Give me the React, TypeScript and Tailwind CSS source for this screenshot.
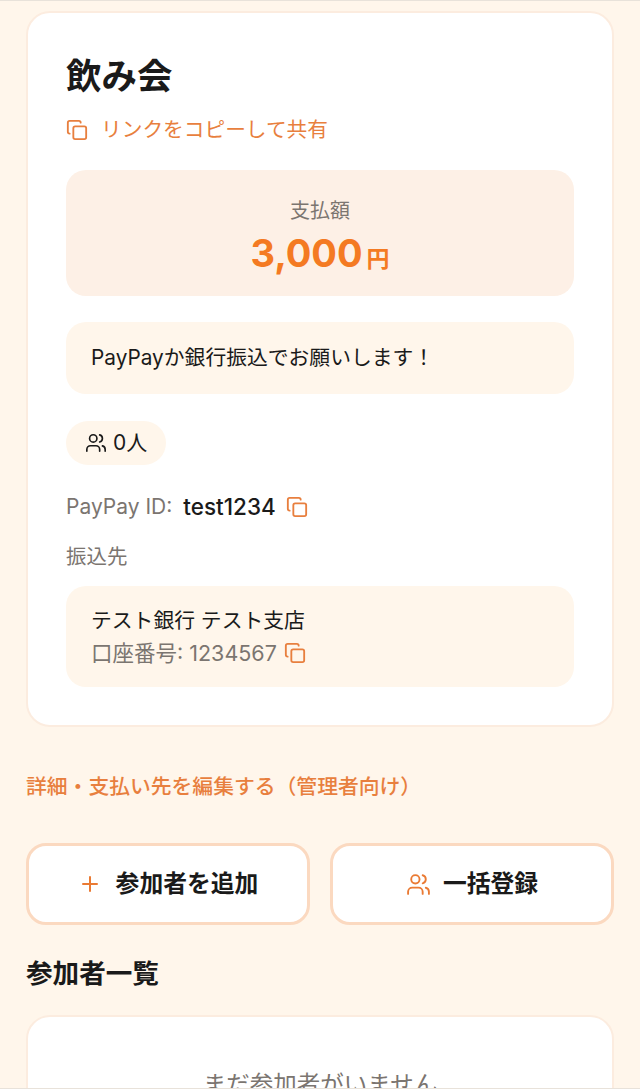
import { Copy, Plus, Users } from "lucide-react";

const font = "font-['Inter','Noto_Sans_CJK_JP',sans-serif]";

function CopyIcon({ className }: { className?: string }) {
  return <Copy className={className} size={22} strokeWidth={2} />;
}

export default function App() {
  return (
    <div className={`${font} h-[1089px] overflow-hidden border-y border-[#e8e2da] bg-[#fff6eb] px-[26px] pt-[10px] text-[#1a1a1a]`}>
      <section className="rounded-[24px] border-2 border-[#fcecdf] bg-white px-[38px] pb-[38px] pt-[39px]">
        <h1 className="text-[35.5px] font-bold leading-[50px]">飲み会</h1>
        <div className="mt-[13px] flex items-center gap-[13px] text-[20.7px] leading-[30px] text-[#e87f3e]">
          <CopyIcon />
          <span>リンクをコピーして共有</span>
        </div>
        <div className="mt-[25px] flex h-[126px] flex-col items-center rounded-[20px] bg-[#fdf0e6] pt-[27px]">
          <p className="text-[20px] leading-[28px] text-[#7b7570]">支払額</p>
          <p className="mt-[4px] flex items-baseline gap-[4px] font-bold leading-[48px] text-[#f47a22]">
            <span className="text-[38px]">3,000</span>
            <span className="text-[23px]">円</span>
          </p>
        </div>
        <div className="mt-[26px] rounded-[20px] bg-[#fff6eb] px-[25px] py-[21px] text-[20.8px] leading-[30px]">
          PayPayか銀行振込でお願いします！
        </div>
        <div className="mt-[27px] flex h-[44px] w-fit items-center gap-[6px] rounded-full bg-[#fff6eb] px-[19px] text-[21px]">
          <Users size={22} strokeWidth={1.8} />
          <span>0人</span>
        </div>
        <div className="mt-[26px] flex h-[32px] items-center text-[21px]">
          <span className="text-[#7b7570]">PayPay ID:</span>
          <span className="ml-[11px] text-[22.5px] font-medium">test1234</span>
          <CopyIcon className="ml-[10px] text-[#e87f3e]" />
        </div>
        <p className="mt-[19px] text-[20.5px] leading-[30px] text-[#7b7570]">振込先</p>
        <div className="mt-[14px] rounded-[20px] bg-[#fff6eb] px-[25px] pb-[18px] pt-[19px]">
          <p className="text-[20.8px] leading-[32px]">テスト銀行 テスト支店</p>
          <div className="flex h-[32px] items-center text-[21.5px] text-[#7b7570]">
            <span>口座番号: 1234567</span>
            <CopyIcon className="ml-[7px] text-[#e87f3e]" />
          </div>
        </div>
      </section>
      <p className="mt-[45px] text-[20.8px] font-medium leading-[30px] text-[#e87f3e]">詳細・支払い先を編集する（管理者向け）</p>
      <div className="mt-[41px] grid grid-cols-2 gap-[20px]">
        <button className="flex h-[82px] items-center justify-center gap-[14px] rounded-[20px] border-[3px] border-[#fbd9c0] bg-white text-[23.8px] font-bold">
          <Plus size={24} strokeWidth={2} className="text-[#ea7a33]" />
          <span>参加者を追加</span>
        </button>
        <button className="flex h-[82px] items-center justify-center gap-[12px] rounded-[20px] border-[3px] border-[#fbd9c0] bg-white text-[23.8px] font-bold">
          <Users size={25} strokeWidth={1.8} className="text-[#ea7a33]" />
          <span>一括登録</span>
        </button>
      </div>
      <h2 className="mt-[28px] text-[26.6px] font-bold leading-[40px]">参加者一覧</h2>
      <section className="mt-[22px] h-[200px] rounded-[24px] border-2 border-[#fcecdf] bg-white pt-[50px] text-center text-[23.5px] text-[#7b7570]">
        まだ参加者がいません
      </section>
    </div>
  );
}
